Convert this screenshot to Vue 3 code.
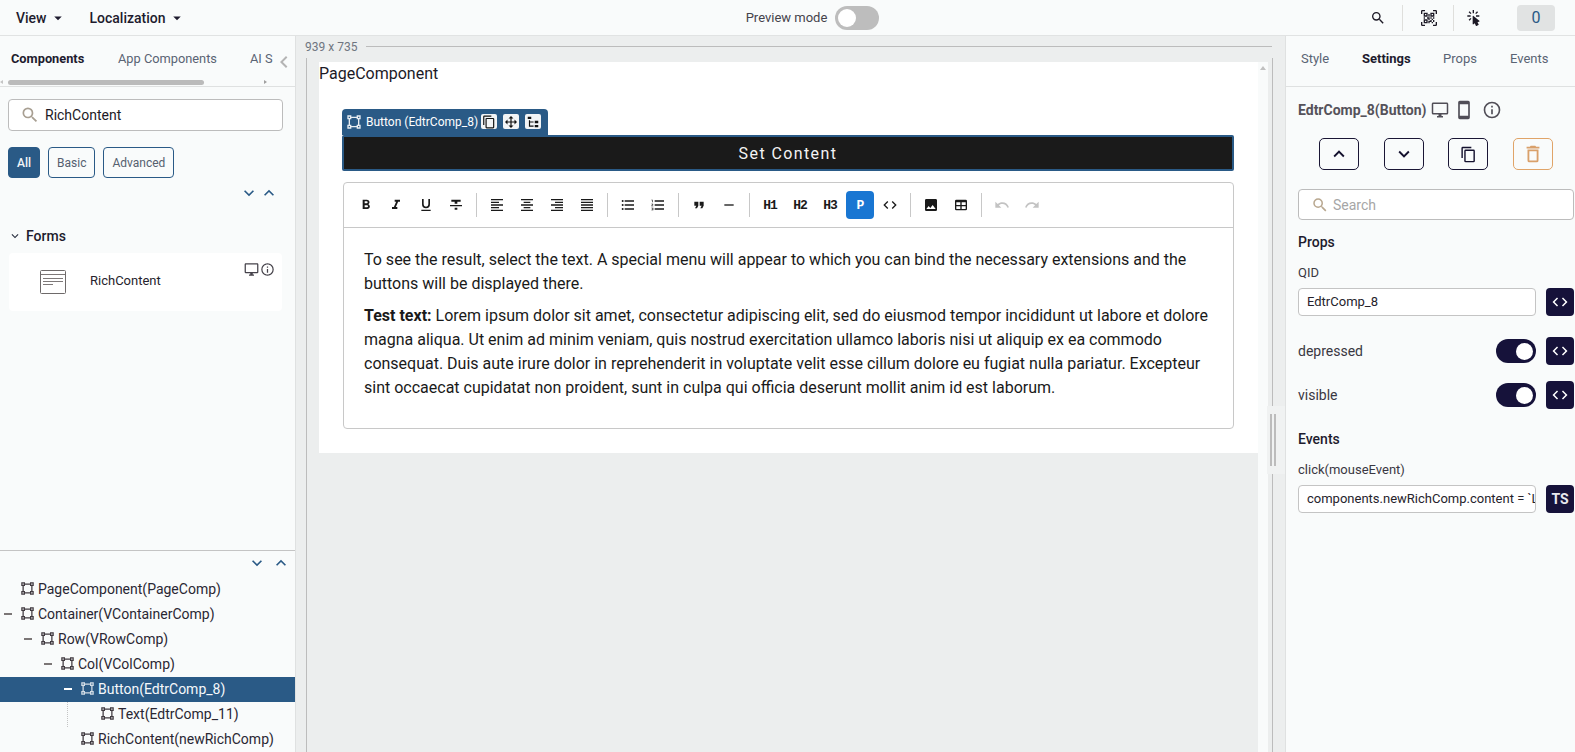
<script setup>
const P = {
  bold: 'M13.5,15.5H10V12.5H13.5A1.5,1.5 0 0,1 15,14A1.5,1.5 0 0,1 13.5,15.5M10,6.5H13A1.5,1.5 0 0,1 14.5,8A1.5,1.5 0 0,1 13,9.5H10M15.6,10.79C16.57,10.11 17.25,9 17.25,8C17.25,5.74 15.5,4 13.25,4H7V18H14.04C16.14,18 17.75,16.3 17.75,14.21C17.75,12.69 16.89,11.39 15.6,10.79Z',
  italic: 'M10,4V7H12.21L8.79,15H6V18H14V15H11.79L15.21,7H18V4H10Z',
  underline: 'M5,21H19V19H5V21M12,17A6,6 0 0,0 18,11V3H15.5V11A3.5,3.5 0 0,1 12,14.5A3.5,3.5 0 0,1 8.5,11V3H6V11A6,6 0 0,0 12,17Z',
  strike: 'M3,14H21V12H3M5,4V7H10V10H14V7H19V4M10,19H14V16H10V19Z',
  left: 'M3,3H21V5H3V3M3,7H15V9H3V7M3,11H21V13H3V11M3,15H15V17H3V15M3,19H21V21H3V19Z',
  center: 'M3,3H21V5H3V3M7,7H17V9H7V7M3,11H21V13H3V11M7,15H17V17H7V15M3,19H21V21H3V19Z',
  right: 'M3,3H21V5H3V3M9,7H21V9H9V7M3,11H21V13H3V11M9,15H21V17H9V15M3,19H21V21H3V19Z',
  justify: 'M3,3H21V5H3V3M3,7H21V9H3V7M3,11H21V13H3V11M3,15H21V17H3V15M3,19H21V21H3V19Z',
  bullet: 'M7,5H21V7H7V5M7,13V11H21V13H7M4,4.5A1.5,1.5 0 0,1 5.5,6A1.5,1.5 0 0,1 4,7.5A1.5,1.5 0 0,1 2.5,6A1.5,1.5 0 0,1 4,4.5M4,10.5A1.5,1.5 0 0,1 5.5,12A1.5,1.5 0 0,1 4,13.5A1.5,1.5 0 0,1 2.5,12A1.5,1.5 0 0,1 4,10.5M7,19V17H21V19H7M4,16.5A1.5,1.5 0 0,1 5.5,18A1.5,1.5 0 0,1 4,19.5A1.5,1.5 0 0,1 2.5,18A1.5,1.5 0 0,1 4,16.5Z',
  number: 'M7,13V11H21V13H7M7,19V17H21V19H7M7,7V5H21V7H7M3,8V5H2V4H4V8H3M2,17V16H5V20H2V19H4V18.5H3V17.5H4V17H2M4.25,10A0.75,0.75 0 0,1 5,10.75C5,10.95 4.92,11.14 4.79,11.27L3.12,13H5V14H2V13.08L4,11H2V10H4.25Z',
  quote: 'M14,17H17L19,13V7H13V13H16M6,17H9L11,13V7H5V13H8L6,17Z',
  minus: 'M19,13H5V11H19V13Z',
  code: 'M14.6,16.6L19.2,12L14.6,7.4L16,6L22,12L16,18L14.6,16.6M9.4,16.6L4.8,12L9.4,7.4L8,6L2,12L8,18L9.4,16.6Z',
  image: 'M8.5,13.5L11,16.5L14.5,12L19,18H5M21,19V5C21,3.89 20.1,3 19,3H5A2,2 0 0,0 3,5V19A2,2 0 0,0 5,21H19A2,2 0 0,0 21,19Z',
  table: 'M5,4H19A2,2 0 0,1 21,6V18A2,2 0 0,1 19,20H5A2,2 0 0,1 3,18V6A2,2 0 0,1 5,4M5,8V12H11V8H5M13,8V12H19V8H13M5,14V18H11V14H5M13,14V18H19V14H13Z',
  undo: 'M12.5,8C9.85,8 7.45,9 5.6,10.6L2,7V16H11L7.38,12.38C8.77,11.22 10.54,10.5 12.5,10.5C16.04,10.5 19.05,12.81 20.1,16L22.47,15.22C21.08,11.03 17.15,8 12.5,8Z',
  redo: 'M18.4,10.6C16.55,9 14.15,8 11.5,8C6.85,8 2.92,11.03 1.54,15.22L3.9,16C4.95,12.81 7.95,10.5 11.5,10.5C13.45,10.5 15.23,11.22 16.62,12.38L13,16H22V7L18.4,10.6Z',
  square: 'M2,2H8V4H16V2H22V8H20V16H22V22H16V20H8V22H2V16H4V8H2V2M16,8V6H8V8H6V16H8V18H16V16H18V8H16M4,4V6H6V4H4M18,4V6H20V4H18M4,18V20H6V18H4M18,18V20H20V18H18Z',
  search: 'M9.5,3A6.5,6.5 0 0,1 16,9.5C16,11.11 15.41,12.59 14.44,13.73L14.71,14H15.5L20.5,19L19,20.5L14,15.5V14.71L13.73,14.44C12.59,15.41 11.11,16 9.5,16A6.5,6.5 0 0,1 3,9.5A6.5,6.5 0 0,1 9.5,3M9.5,5C7,5 5,7 5,9.5C5,12 7,14 9.5,14C12,14 14,12 14,9.5C14,7 12,5 9.5,5Z',
  monitor: 'M21,16H3V4H21M21,2H3C1.89,2 1,2.89 1,4V16A2,2 0 0,0 3,18H10V20H8V22H16V20H14V18H21A2,2 0 0,0 23,16V4C23,2.89 22.1,2 21,2Z',
  phone: 'M17,19H7V5H17M17,1H7C5.89,1 5,1.89 5,3V21A2,2 0 0,0 7,23H17A2,2 0 0,0 19,21V3C19,1.89 18.1,1 17,1Z',
  info: 'M11,9H13V7H11M12,20C7.59,20 4,16.41 4,12C4,7.59 7.59,4 12,4C16.41,4 20,7.59 20,12C20,16.41 16.41,20 12,20M12,2A10,10 0 0,0 2,12A10,10 0 0,0 12,22A10,10 0 0,0 22,12A10,10 0 0,0 12,2M11,17H13V11H11V17Z',
  copy: 'M19,21H8V7H19M19,5H8A2,2 0 0,0 6,7V21A2,2 0 0,0 8,23H19A2,2 0 0,0 21,21V7A2,2 0 0,0 19,5M16,1H4A2,2 0 0,0 2,3V17H4V3H16V1Z',
  up: 'M7.41,15.41L12,10.83L16.59,15.41L18,14L12,8L6,14L7.41,15.41Z',
  down: 'M7.41,8.58L12,13.17L16.59,8.58L18,10L12,16L6,10L7.41,8.58Z',
  chevL: 'M15.41,16.58L10.83,12L15.41,7.41L14,6L8,12L14,18L15.41,16.58Z',
  caret: 'M7,10L12,15L17,10H7Z',
  trash: 'M6,19A2,2 0 0,0 8,21H16A2,2 0 0,0 18,19V7H6V19M8,9H16V19H8V9M15.5,4L14.5,3H9.5L8.5,4H5V6H19V4H15.5Z',
  move: 'M13,6V11H18V7.75L22.25,12L18,16.25V13H13V18H16.25L12,22.25L7.75,18H11V13H6V16.25L1.75,12L6,7.75V11H11V6H7.75L12,1.75L16.25,6H13Z',
  click: 'M10.76,8.69A0.76,0.76 0 0,0 10,9.45V20.9C10,21.32 10.34,21.66 10.76,21.66C10.95,21.66 11.11,21.6 11.24,21.5L13.15,19.95L14.81,23.57C14.94,23.84 15.21,24 15.5,24C15.61,24 15.72,24 15.83,23.92L18.59,22.64C18.97,22.46 19.15,22 18.95,21.63L17.28,18L19.69,17.55C19.85,17.5 20,17.43 20.12,17.29C20.39,16.97 20.35,16.5 20,16.21L11.26,8.86L11.25,8.87C11.12,8.76 10.95,8.69 10.76,8.69M15,10V8H20V10H15M13.83,4.76L16.66,1.93L18.07,3.34L15.24,6.17L13.83,4.76M10,0H12V5H10V0M3.93,14.66L6.76,11.83L8.17,13.24L5.34,16.07L3.93,14.66M3.93,3.34L5.34,1.93L8.17,4.76L6.76,6.17L3.93,3.34M7,10H2V8H7V10',
  qr: 'M4,4H10V10H4V4M20,4V10H14V4H20M14,15H16V13H14V11H16V13H18V11H20V13H18V15H20V18H18V20H16V18H13V20H11V16H14V15M16,15V18H18V15H16M4,20V14H10V20H4M6,6V8H8V6H6M16,6V8H18V6H16M6,16V18H8V16H6M4,11H6V13H4V11M9,11H13V15H11V13H9V11M11,6H13V10H11V6M2,2V6H0V2A2,2 0 0,1 2,0H6V2H2M22,0A2,2 0 0,1 24,2V6H22V2H18V0H22M2,18V22H6V24H2A2,2 0 0,1 0,22V18H2M22,22V18H24V22A2,2 0 0,1 22,24H18V22H22Z',
  tree: 'M3,3H9V7H3V3M15,10H21V14H15V10M15,17H21V21H15V17M13,13H7V18H13V20H7L5,20V9H7V11H13V13Z'
}

const toolbar = [
  [{ i: 'bold' }, { i: 'italic' }, { i: 'underline' }, { i: 'strike' }],
  [{ i: 'left' }, { i: 'center' }, { i: 'right' }, { i: 'justify' }],
  [{ i: 'bullet' }, { i: 'number' }],
  [{ i: 'quote' }, { i: 'minus' }],
  [{ t: 'H1' }, { t: 'H2' }, { t: 'H3' }, { t: 'P', on: true }, { i: 'code' }],
  [{ i: 'image' }, { i: 'table' }],
  [{ i: 'undo', off: true }, { i: 'redo', off: true }]
]

const tree = [
  { label: 'PageComponent(PageComp)', depth: 0 },
  { label: 'Container(VContainerComp)', depth: 0, open: true },
  { label: 'Row(VRowComp)', depth: 1, open: true },
  { label: 'Col(VColComp)', depth: 2, open: true },
  { label: 'Button(EdtrComp_8)', depth: 3, open: true, selected: true },
  { label: 'Text(EdtrComp_11)', depth: 4, guide: true },
  { label: 'RichContent(newRichComp)', depth: 3 }
]
</script>

<template>
  <div class="app">
    <header class="topbar">
      <div class="menus">
        <span class="menu">View<svg class="ic18" viewBox="0 0 24 24"><path :d="P.caret" /></svg></span>
        <span class="menu">Localization<svg class="ic18" viewBox="0 0 24 24"><path :d="P.caret" /></svg></span>
      </div>
      <div class="preview">
        <span>Preview mode</span>
        <span class="preview-toggle"><i></i></span>
      </div>
      <div class="actions">
        <svg class="act-search" viewBox="0 0 24 24"><path :d="P.search" /></svg>
        <span class="act-div"></span>
        <svg class="act-qr" viewBox="0 0 24 24"><path :d="P.qr" /></svg>
        <span class="act-div second"></span>
        <svg class="act-click" viewBox="0 0 24 24"><path :d="P.click" /></svg>
        <span class="badge">0</span>
      </div>
    </header>

    <div class="main">
      <aside class="left">
        <div class="tabs-wrap">
          <div class="left-tabs">
            <span class="tab strong">Components</span>
            <span class="tab">App Components</span>
            <span class="tab cut">AI S</span>
            <svg class="tab-back" viewBox="0 0 24 24"><path :d="P.chevL" /></svg>
          </div>
          <div class="hscroll">
            <i class="arrow-l"></i><b></b><i class="arrow-r"></i>
          </div>
        </div>
        <div class="comp-search">
          <svg viewBox="0 0 24 24"><path :d="P.search" /></svg>
          <span>RichContent</span>
        </div>
        <div class="chips">
          <span class="chip on">All</span>
          <span class="chip">Basic</span>
          <span class="chip">Advanced</span>
        </div>
        <div class="expanders">
          <svg viewBox="0 0 24 24"><path :d="P.down" /></svg>
          <svg viewBox="0 0 24 24"><path :d="P.up" /></svg>
        </div>
        <div class="group">
          <svg viewBox="0 0 24 24"><path :d="P.down" /></svg>
          <span>Forms</span>
        </div>
        <div class="card">
          <svg class="card-ic" viewBox="0 0 26 24">
            <rect x="0.5" y="0.5" width="25" height="23" rx="1" stroke="#6e6a6a" />
            <path d="M1 4.5H25M3 8.5H23M3 11.5H23M3 14.5H13" stroke="#7d7878" />
          </svg>
          <span class="card-name">RichContent</span>
          <span class="card-meta">
            <svg class="m1" viewBox="0 0 24 24"><path :d="P.monitor" /></svg>
            <svg class="m2" viewBox="0 0 24 24"><path :d="P.info" /></svg>
          </span>
        </div>

        <div class="tree-panel">
          <div class="tree-exp">
            <svg viewBox="0 0 24 24"><path :d="P.down" /></svg>
            <svg viewBox="0 0 24 24"><path :d="P.up" /></svg>
          </div>
          <div
            v-for="row in tree"
            :key="row.label"
            class="tree-row"
            :class="{ selected: row.selected }"
            :style="{ paddingLeft: 20 + row.depth * 20 + 'px' }"
          >
            <i v-if="row.open" class="dash"></i>
            <i v-if="row.guide" class="guide"></i>
            <svg viewBox="0 0 24 24"><path :d="P.square" /></svg>
            <span>{{ row.label }}</span>
          </div>
        </div>
      </aside>

      <section class="canvas">
        <div class="ruler">
          <span>939 x 735</span>
          <i></i>
        </div>
        <div class="frame">
          <div class="page-col">
            <div class="page">
              <div class="page-title">PageComponent</div>
              <div class="tag">
                <svg class="tag-ic" viewBox="0 0 24 24"><path :d="P.square" /></svg>
                <span class="tag-text">Button (EdtrComp_8)</span>
                <span class="tag-btn"><svg viewBox="0 0 24 24"><path :d="P.copy" /></svg></span>
                <span class="tag-btn"><svg viewBox="0 0 24 24"><path :d="P.move" /></svg></span>
                <span class="tag-btn"><svg viewBox="0 0 24 24"><path :d="P.tree" /></svg></span>
              </div>
              <div class="set-btn">Set Content</div>
              <div class="rich">
                <div class="rich-tools">
                  <template v-for="(grp, g) in toolbar" :key="g">
                    <i v-if="g" class="tool-div"></i>
                    <span
                      v-for="(it, n) in grp"
                      :key="n"
                      class="tool"
                      :class="{ on: it.on, off: it.off }"
                    >
                      <svg v-if="it.i" viewBox="0 0 24 24"><path :d="P[it.i]" /></svg>
                      <template v-else>{{ it.t }}</template>
                    </span>
                  </template>
                </div>
                <div class="rich-body">
                  <p>To see the result, select the text. A special menu will appear to which you can bind the necessary extensions and the buttons will be displayed there.</p>
                  <p><strong>Test text:</strong> Lorem ipsum dolor sit amet, consectetur adipiscing elit, sed do eiusmod tempor incididunt ut labore et dolore magna aliqua. Ut enim ad minim veniam, quis nostrud exercitation ullamco laboris nisi ut aliquip ex ea commodo consequat. Duis aute irure dolor in reprehenderit in voluptate velit esse cillum dolore eu fugiat nulla pariatur. Excepteur sint occaecat cupidatat non proident, sunt in culpa qui officia deserunt mollit anim id est laborum.</p>
                </div>
              </div>
            </div>
          </div>
          <div class="vscroll"><i></i></div>
        </div>
        <div class="handle"><i></i><i></i></div>
      </section>

      <aside class="right">
        <div class="right-tabs">
          <span>Style</span>
          <span class="strong">Settings</span>
          <span>Props</span>
          <span>Events</span>
        </div>
        <div class="right-body">
          <div class="title-row">
            <span class="comp-title">EdtrComp_8(Button)</span>
            <svg class="t-mon" viewBox="0 0 24 24"><path :d="P.monitor" /></svg>
            <svg class="t-ph" viewBox="0 0 24 24"><path :d="P.phone" /></svg>
            <svg class="t-info" viewBox="0 0 24 24"><path :d="P.info" /></svg>
          </div>
          <div class="ctrl-row">
            <span class="ctrl"><svg viewBox="0 0 24 24"><path :d="P.up" /></svg></span>
            <span class="ctrl"><svg viewBox="0 0 24 24"><path :d="P.down" /></svg></span>
            <span class="ctrl"><svg class="small" viewBox="0 0 24 24"><path :d="P.copy" /></svg></span>
            <span class="ctrl danger"><svg viewBox="0 0 24 24"><path :d="P.trash" /></svg></span>
          </div>
          <div class="prop-search">
            <svg viewBox="0 0 24 24"><path :d="P.search" /></svg>
            <span>Search</span>
          </div>
          <div class="sec props-sec">Props</div>
          <div class="lbl qid">QID</div>
          <div class="field-row">
            <div class="field">EdtrComp_8</div>
            <span class="sq"><svg viewBox="0 0 24 24"><path :d="P.code" /></svg></span>
          </div>
          <div class="switch-row first">
            <span>depressed</span>
            <span class="sw"><i></i></span>
            <span class="sq"><svg viewBox="0 0 24 24"><path :d="P.code" /></svg></span>
          </div>
          <div class="switch-row">
            <span>visible</span>
            <span class="sw"><i></i></span>
            <span class="sq"><svg viewBox="0 0 24 24"><path :d="P.code" /></svg></span>
          </div>
          <div class="sec events-sec">Events</div>
          <div class="lbl click">click(mouseEvent)</div>
          <div class="field-row">
            <div class="field">components.newRichComp.content = `L</div>
            <span class="sq ts">TS</span>
          </div>
        </div>
      </aside>
    </div>
  </div>
</template>

<style>
html, body { margin: 0; overflow: hidden; }
</style>

<style scoped>
.app {
  width: 1575px;
  height: 752px;
  overflow: hidden;
  display: flex;
  flex-direction: column;
  background: #f9fbfb;
  font-family: Roboto, "Liberation Sans", sans-serif;
  color: #1d1a26;
  font-size: 14px;
}
svg { display: block; fill: currentColor; flex: none; }
i { display: block; }

/* top bar */
.topbar {
  height: 36px;
  box-sizing: border-box;
  border-bottom: 1px solid #e1e3e3;
  display: grid;
  grid-template-columns: 1fr auto 1fr;
  align-items: center;
  padding-left: 16px;
  flex: none;
}
.menus { display: flex; gap: 23px; }
.menu { display: flex; align-items: center; gap: 0; font-weight: 500; font-size: 14px; color: #1e1b2e; }
.ic18 { width: 18px; height: 18px; margin-left: 2px; }
.preview { display: flex; align-items: center; gap: 8px; font-size: 13px; color: #45434c; margin-left: 34px; }
.preview-toggle { width: 44px; height: 24px; border-radius: 12px; background: #bdbdbd; display: flex; align-items: center; padding-left: 3px; box-sizing: border-box; }
.preview-toggle i { width: 18px; height: 18px; background: #fff; border-radius: 50%; }
.actions { display: flex; align-items: center; justify-content: flex-end; }
.act-search { width: 16px; height: 16px; color: #1d1a26; }
.act-div { width: 1px; height: 26px; background: #dfdfdc; margin: 0 18px 0 16px; }
.act-div.second { margin: 0 12px 0 16px; }
.act-qr { width: 16px; height: 16px; color: #1d1a26; }
.act-click { width: 16px; height: 16px; color: #1d1a26; }
.badge { width: 38px; height: 26px; margin: 0 20px 0 35px; background: #e1e3e3; border-radius: 4px; display: flex; align-items: center; justify-content: center; font-size: 16px; color: #2a5a86; }

.main { flex: 1; min-height: 0; display: flex; }

/* left panel */
.left { width: 296px; flex: none; box-sizing: border-box; border-right: 1px solid #dfe1e1; display: flex; flex-direction: column; height: 716px; }
.tabs-wrap { height: 51px; box-sizing: border-box; border-bottom: 1px solid #dfe1e1; position: relative; overflow: hidden; flex: none; }
.left-tabs { display: flex; height: 44px; align-items: center; font-size: 12.8px; white-space: nowrap; position: relative; }
.tab { color: #5a6474; position: absolute; top: 15px; }
.tab:nth-child(1) { left: 11px; }
.tab:nth-child(2) { left: 118px; }
.tab:nth-child(3) { left: 250px; }
.tab.strong { font-weight: 700; color: #1e1b2e; }
.tab-back { position: absolute; left: 272px; top: 14px; width: 24px; height: 24px; color: #b4b4b4; }
.hscroll { position: absolute; left: 0; top: 44px; width: 270px; height: 5px; }
.hscroll b { position: absolute; left: 8px; width: 196px; height: 5px; border-radius: 3px; background: #bbb; }
.arrow-l { position: absolute; left: 0; top: 0; width: 0; height: 0; border: 2.5px solid transparent; border-right: 3px solid #c4c4c4; border-left: 0; }
.arrow-r { position: absolute; left: 264px; top: 0; width: 0; height: 0; border: 2.5px solid transparent; border-left: 3px solid #a0a0a0; border-right: 0; }

.comp-search { margin: 12px 12px 0 8px; height: 32px; box-sizing: border-box; border: 1px solid #bcbcbc; border-radius: 4px; background: #fff; display: flex; align-items: center; padding-left: 11px; gap: 5px; flex: none; font-size: 14px; color: #1d1a26; }
.comp-search svg { width: 20px; height: 20px; color: #a89f92; }
.chips { display: flex; gap: 8px; margin: 16px 0 0 8px; flex: none; }
.chip { height: 31px; box-sizing: border-box; padding: 0 8px; border: 1px solid #2a5a86; border-radius: 4px; display: flex; align-items: center; font-size: 12px; color: #55606f; }
.chip.on { background: #2a5a86; color: #f2f5f8; font-weight: 500; }
.expanders { display: flex; margin: 5px 0 0 239px; flex: none; color: #2a5a86; }
.expanders svg { width: 20px; height: 20px; }
.group { display: flex; align-items: center; margin: 23px 0 0 8px; height: 20px; gap: 4px; flex: none; font-size: 14px; font-weight: 500; color: #1e1b2e; }
.group svg { width: 14px; height: 14px; color: #2a3140; }
.card { margin: 7px 13px 0 9px; height: 58px; background: #fff; border-radius: 4px; display: flex; align-items: center; position: relative; flex: none; font-size: 13px; }
.card-ic { width: 26px; height: 24px; margin-left: 31px; fill: none; }
.card-name { margin: -4px 0 0 24px; color: #26232c; }
.card-meta { position: absolute; left: 235px; top: 9px; display: flex; gap: 1px; }
.card-meta .m1 { width: 15px; height: 15px; color: #45424a; }
.card-meta .m2 { width: 15px; height: 15px; color: #45424a; }

.tree-panel { margin-top: auto; border-top: 1px solid #c4c4c4; flex: none; height: 202px; box-sizing: border-box; }
.tree-exp { height: 26px; display: flex; gap: 4px; padding: 2px 0 0 247px; box-sizing: border-box; color: #2a5a86; }
.tree-exp svg { width: 20px; height: 20px; }
.tree-row { height: 25px; box-sizing: border-box; padding-bottom: 2px; display: flex; align-items: center; gap: 3px; font-size: 14px; color: #2a2733; position: relative; white-space: nowrap; }
.tree-row svg { width: 15px; height: 15px; color: #403a40; }
.tree-row.selected { background: #2a5a86; color: #f5f8fb; }
.tree-row.selected svg { color: #d3dde6; }
.dash { width: 8px; height: 2px; background: #7b7676; margin-left: -16px; margin-right: 5px; }
.selected .dash { background: #fff; }
.guide { position: absolute; left: 67px; top: 0; bottom: 0; border-left: 1px dotted #c4c4c4; }

/* canvas */
.canvas { width: 989px; flex: none; background: #eceeee; display: flex; flex-direction: column; position: relative; }
.ruler { height: 22px; flex: none; display: flex; align-items: center; padding-left: 9px; font-size: 12px; color: #6f7580; gap: 9px; }
.ruler i { width: 906px; height: 1px; background: #bcbcbc; margin-top: -1px; }
.frame { flex: 1; min-height: 0; margin: 0 12px 0 10px; border-left: 1px solid #bcbcbc; border-right: 1px solid #bcbcbc; padding: 4px 4px 0 12px; display: flex; }
.page-col { flex: 1; min-width: 0; }
.page { background: #fff; height: 391px; box-sizing: border-box; padding: 0 24px; }
.page-title { height: 24px; line-height: 24px; font-size: 16px; color: #1d1a26; margin: 0 0 23px -24px; }
.tag { margin-left: -1px; width: 206px; height: 26px; box-sizing: border-box; background: #2a5a86; border-radius: 4px 4px 0 0; color: #fff; display: flex; align-items: center; padding-left: 4px; font-size: 12px; white-space: nowrap; }
.tag-ic { width: 16px; height: 16px; color: #e8edf2; }
.tag-text { margin-left: 4px; width: 112px; }
.tag-btn { width: 16px; height: 15px; background: #f2f4f6; border-radius: 2px; margin: -1px 6px 0 0; display: flex; align-items: center; justify-content: center; color: #111; }
.tag-text + .tag-btn { margin-left: 3px; }
.tag-btn svg { width: 14px; height: 14px; }
.set-btn { height: 36px; box-sizing: border-box; margin-left: -1px; background: #1a1a1a; border: 2px solid #2a5a86; color: #f4f4f4; font-size: 16px; font-weight: 400; letter-spacing: 1.4px; display: flex; align-items: center; justify-content: center; border-radius: 2px; }
.rich { margin-top: 11px; height: 247px; box-sizing: border-box; border: 1px solid #c8c8c8; border-radius: 4px; display: flex; flex-direction: column; }
.rich-tools { height: 45px; flex: none; box-sizing: border-box; border-bottom: 1px solid #c8c8c8; display: flex; align-items: center; gap: 2px; padding-left: 8px; }
.tool { width: 28px; height: 28px; border-radius: 4px; display: flex; align-items: center; justify-content: center; color: #1a1a1a; font-family: "Liberation Mono", monospace; font-weight: 700; font-size: 13px; letter-spacing: -1px; }
.tool svg { width: 16px; height: 16px; }
.tool.on { background: #1976d2; color: #fff; }
.tool.off { color: #c3c3c3; }
.tool-div { width: 1px; height: 24px; background: #c8c8c8; margin: 0 4px; flex: none; }
.rich-body { padding: 20px 20px 0; font-size: 16px; line-height: 24px; color: #1a1a1a; }
.rich-body p { margin: 0 0 8px; }
.rich-body strong { font-weight: 700; }
.vscroll { width: 10px; flex: none; margin-left: 0; background: #f9fbfb; display: flex; justify-content: center; padding-top: 4px; box-sizing: border-box; }
.vscroll i { width: 0; height: 0; border: 3px solid transparent; border-bottom: 4px solid #c0c0c0; border-top: 0; }
.handle { position: absolute; left: 971px; top: 370px; width: 18px; height: 68px; background: #f0f2f2; display: flex; gap: 2px; padding: 8px 0 0 3px; box-sizing: border-box; }
.handle i { width: 2px; height: 52px; background: #bcbcbc; }

/* right */
.right { flex: 1; min-width: 0; box-sizing: border-box; border-left: 1px solid #dfe1e1; display: flex; flex-direction: column; }
.right-tabs { height: 51px; flex: none; box-sizing: border-box; border-bottom: 1px solid #dfe1e1; position: relative; font-size: 13px; color: #5a6474; }
.right-tabs span { position: absolute; top: 15px; }
.right-tabs span:nth-child(1) { left: 15px; }
.right-tabs span:nth-child(2) { left: 76px; font-weight: 700; color: #1e1b2e; }
.right-tabs span:nth-child(3) { left: 157px; }
.right-tabs span:nth-child(4) { left: 224px; }
.right-body { padding: 0 1px 0 12px; }
.title-row { display: flex; align-items: center; height: 24px; margin-top: 11px; color: #514e57; }
.comp-title { font-size: 14px; font-weight: 700; color: #55525a; margin-right: 5px; }
.t-mon { width: 18px; height: 18px; }
.t-ph { width: 20px; height: 20px; margin-left: 5px; }
.t-info { width: 20px; height: 20px; margin-left: 8px; }
.ctrl-row { display: flex; gap: 24.6px; margin: 16px 0 0 21px; }
.ctrl { width: 40px; height: 32px; box-sizing: border-box; border: 1px solid #1a1635; border-radius: 5px; display: flex; align-items: center; justify-content: center; color: #14112e; }
.ctrl svg { width: 22px; height: 22px; }
.ctrl svg.small { width: 17px; height: 17px; }
.ctrl.danger { border-color: #e0a468; color: #d9a06a; }
.prop-search { margin-top: 19px; height: 31px; box-sizing: border-box; border: 1px solid #bcbcbc; border-radius: 4px; background: #fff; display: flex; align-items: center; padding-left: 12px; gap: 4px; font-size: 14px; color: #a6a6a6; }
.prop-search svg { width: 18px; height: 18px; color: #b8a78f; }
.sec { font-size: 14px; font-weight: 500; color: #1e1b2e; height: 16px; line-height: 16px; }
.props-sec { margin-top: 14px; }
.lbl { font-size: 13px; color: #3a3742; height: 16px; line-height: 16px; }
.lbl.qid { margin-top: 15px; }
.field-row { display: flex; align-items: center; gap: 10px; margin-top: 7px; }
.field { width: 238px; height: 28px; flex: none; box-sizing: border-box; border: 1px solid #c4c4c4; border-radius: 4px; background: #fff; padding-left: 8px; line-height: 26px; font-size: 13px; color: #26232c; white-space: nowrap; overflow: hidden; }
.sq { width: 28px; height: 28px; flex: none; background: #16123a; border-radius: 4px; color: #fff; display: flex; align-items: center; justify-content: center; }
.sq svg { width: 18px; height: 18px; }
.sq.ts { font-size: 14px; font-weight: 700; color: #e8e8ee; }
.switch-row { display: flex; align-items: center; height: 28px; margin-top: 16px; font-size: 14px; color: #3a3742; }
.switch-row.first { margin-top: 21px; }
.switch-row > span:first-child { flex: 1; }
.sw { width: 40px; height: 24px; border-radius: 12px; background: #16123a; margin-right: 10px; display: flex; align-items: center; justify-content: flex-end; padding-right: 3px; box-sizing: border-box; }
.sw i { width: 17px; height: 17px; background: #fff; border-radius: 50%; }
.events-sec { margin-top: 22px; }
.lbl.click { margin-top: 15px; }
</style>
